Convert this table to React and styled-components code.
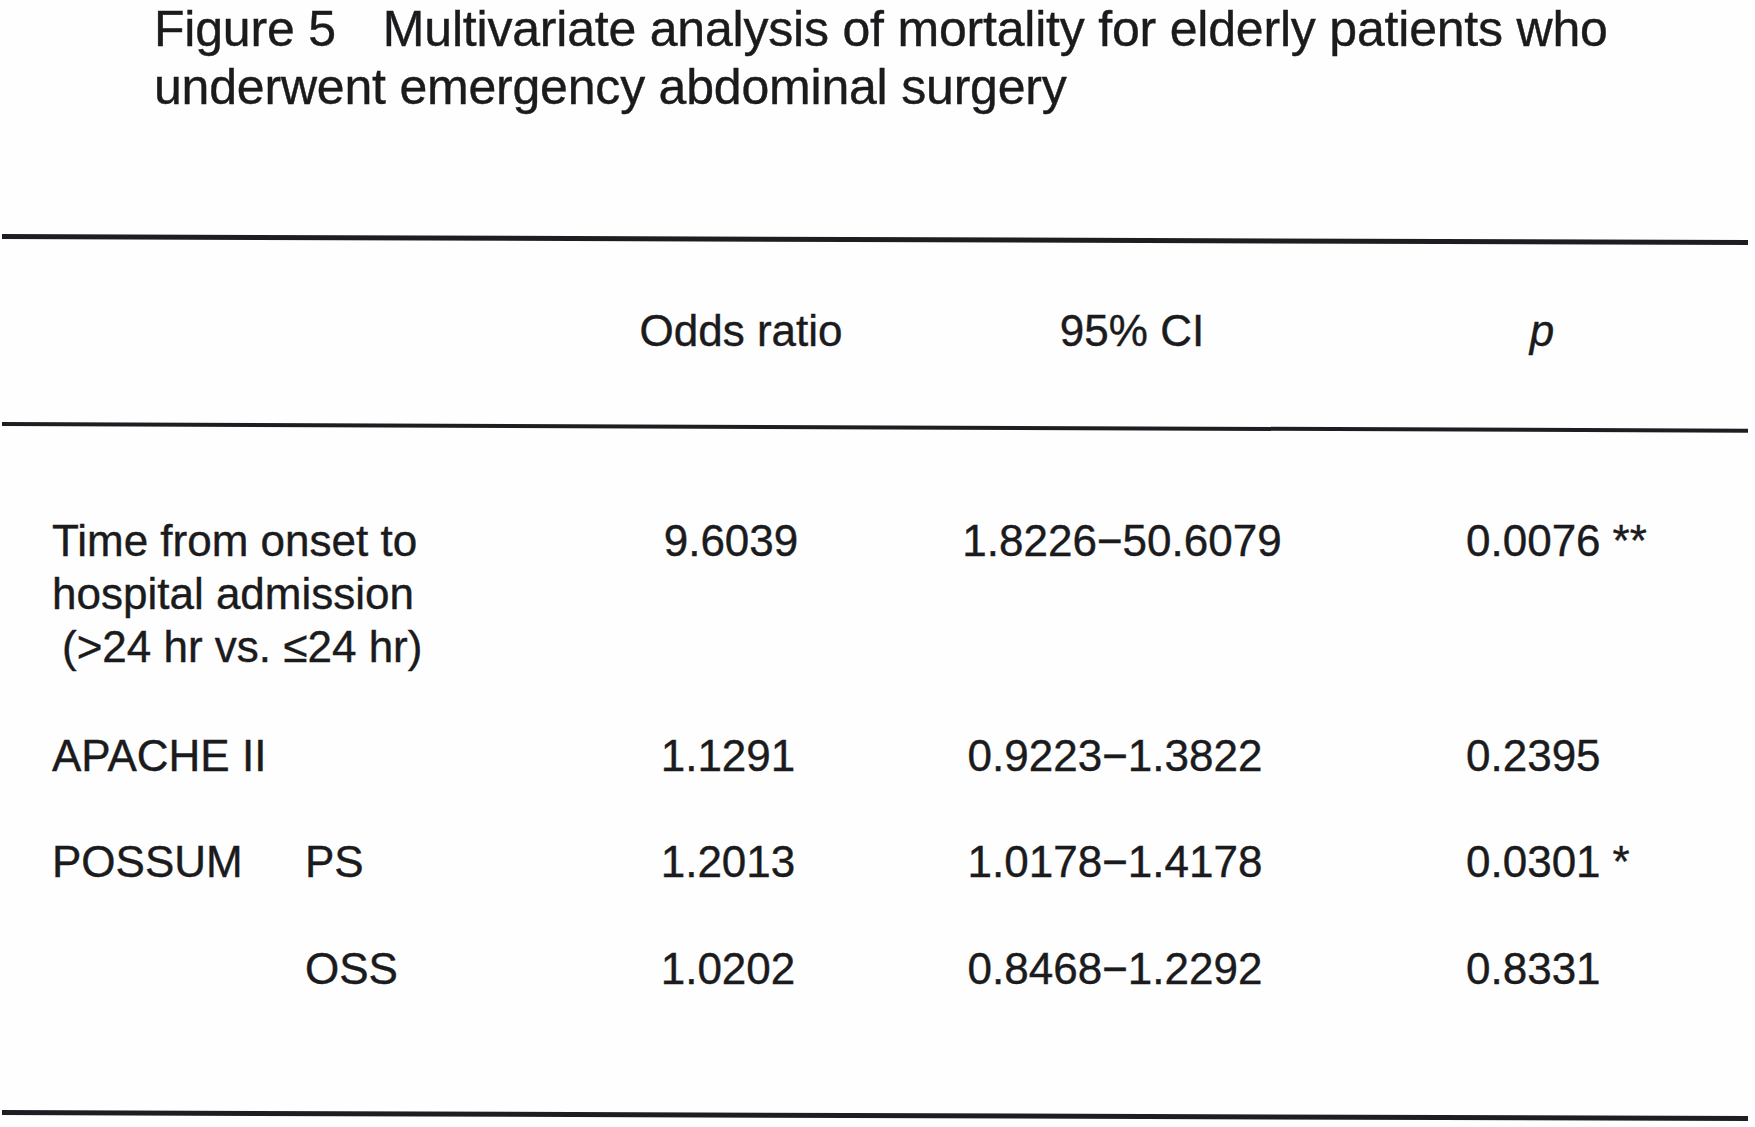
import React from "react";
import styled, { createGlobalStyle } from "styled-components";

const GlobalStyle = createGlobalStyle`
  html, body {
    margin: 0;
    padding: 0;
    background: #ffffff;
  }
  body {
    font-family: "Liberation Sans", Arial, sans-serif;
    color: #1b1b1d;
    -webkit-text-stroke: 0.4px #1b1b1d;
  }
`;

const Page = styled.main`
  width: 1755px;
  height: 1127px;
  overflow: hidden;
  background: #fefefe;
`;

const Caption = styled.h1`
  margin: 0;
  padding: 0 0 0 154px;
  font-size: 50px;
  font-weight: normal;
  line-height: 58px;
  letter-spacing: -0.2px;
`;

const FigureNo = styled.span`
  margin-right: 47px;
`;

const Table = styled.section`
  margin: 118px 0 0 2px;
  width: 1746px;
`;

const Rule = styled.div`
  height: ${(p) => p.$weight}px;
  background: #1e1e22;
  transform: rotate(${(p) => p.$tilt || 0}deg);
  transform-origin: left center;
`;

const Row = styled.div`
  display: grid;
  grid-template-columns: 300px 268px 316px 458px 1fr;
  align-items: ${(p) => (p.$head ? "center" : "start")};
  height: ${(p) => (p.$head ? "183px" : "auto")};
  margin-top: ${(p) => p.$top || 0}px;
  font-size: 44px;
  line-height: 53px;
`;

const Label = styled.div`
  grid-column: ${(p) => (p.$wide ? "1 / span 2" : "auto")};
  padding-left: 50px;
  white-space: nowrap;
`;

const SubLabel = styled.div`
  grid-column: 2;
  padding-left: 3px;
`;

const Indent = styled.span`
  padding-left: 10px;
`;

const Num = styled.div`
  text-align: center;
  white-space: nowrap;
  padding-left: ${(p) => (p.$shift || 0) * 2}px;
`;

const PValue = styled.div`
  grid-column: 5;
  padding-left: 122px;
  white-space: nowrap;
`;

const HeadP = styled.div`
  grid-column: 5;
  text-align: center;
  font-style: italic;
  padding-right: 8px;
`;

const Mark = styled.span`
  margin-left: 12px;
`;

const rows = [
  { label: "APACHE II", odds: "1.1291", ci: "0.9223\u22121.3822", p: "0.2395", top: 56 },
  { label: "POSSUM", sub: "PS", odds: "1.2013", ci: "1.0178\u22121.4178", p: "0.0301", mark: "*", top: 53 },
  { sub: "OSS", odds: "1.0202", ci: "0.8468\u22121.2292", p: "0.8331", top: 54 },
];

const App = () => {
  return (
    <Page>
      <GlobalStyle />
      <Caption>
        <FigureNo>Figure 5</FigureNo>Multivariate analysis of mortality for elderly patients who
        <br />
        underwent emergency abdominal surgery
      </Caption>

      <Table>
        <Rule $weight={5} $tilt={0.2} />
        <Row $head>
          <Label />
          <SubLabel />
          <Num $shift={13}>Odds ratio</Num>
          <Num $shift={17}>95% CI</Num>
          <HeadP>p</HeadP>
        </Row>
        <Rule $weight={4} $tilt={0.22} />

        <Row $top={88}>
          <Label $wide>
            Time from onset to
            <br />
            hospital admission
            <br />
            <Indent>(&gt;24 hr vs. &le;24 hr)</Indent>
          </Label>
          <Num $shift={3}>9.6039</Num>
          <Num $shift={7}>1.8226&minus;50.6079</Num>
          <PValue>
            0.0076<Mark>**</Mark>
          </PValue>
        </Row>

        {rows.map((r, i) => (
          <Row key={i} $top={r.top}>
            <Label>{r.label}</Label>
            <SubLabel>{r.sub}</SubLabel>
            <Num $shift={-3}>{r.odds}</Num>
            <Num $shift={-2}>{r.ci}</Num>
            <PValue>
              {r.p}
              {r.mark && <Mark>{r.mark}</Mark>}
            </PValue>
          </Row>
        ))}

        <div style={{ height: 115 }} />
        <Rule $weight={5} $tilt={0.2} />
      </Table>
    </Page>
  );
};

export default App;
